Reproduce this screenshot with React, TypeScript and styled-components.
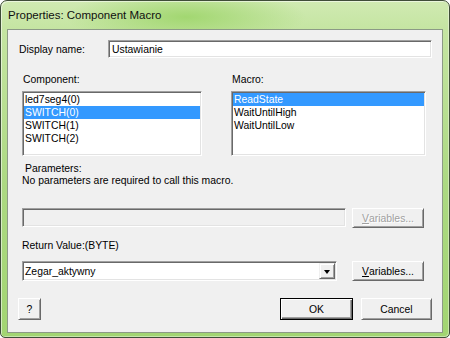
import React from 'react'
import styled, { createGlobalStyle, css } from 'styled-components'

const GlobalStyle = createGlobalStyle`
  html, body {
    margin: 0;
    padding: 0;
    background: #ffffff;
  }
  body {
    font-family: "Liberation Sans", Arial, sans-serif;
    font-size: 10.4px;
    color: #000;
  }
  * {
    box-sizing: border-box;
  }
`

const sunken = css`
  border: 1px solid;
  border-color: #a0a0a0 #ffffff #ffffff #a0a0a0;
  padding: 1px;
  box-shadow: inset 1px 1px 0 #696969, inset -1px -1px 0 #e3e3e3;
`

const Window = styled.div`
  width: 450px;
  height: 338px;
  display: flex;
  flex-direction: column;
  padding: 0 6px 4px 6px;
  border: 1px solid #3f4d38;
  border-radius: 7px 7px 5px 5px;
  background:
    radial-gradient(ellipse 120px 28px at 185px 16px, rgba(160, 214, 110, 0.95) 0%, rgba(160, 214, 110, 0) 100%),
    linear-gradient(180deg, #d0eab2 0%, #c5e5a2 28px, #acd982 55%, #a2d572 100%);
  box-shadow: inset 1px 1px 0 rgba(255, 255, 255, 0.55), inset -1px -1px 0 rgba(255, 255, 255, 0.4);
`
const TitleBar = styled.div`
  height: 28px;
  display: flex;
  align-items: center;
  padding-left: 1px;
  padding-bottom: 1px;
  font-size: 11.5px;
  color: #101010;
`
const Client = styled.div`
  flex: 1;
  display: flex;
  flex-direction: column;
  background: #f0f0f0;
  border: 1px solid #8c9a86;
  padding: 10px 10px 0 10px;
`
const NameRow = styled.div`
  display: flex;
  align-items: center;
  height: 18px;
`
const NameLabel = styled.div`
  width: 90px;
  padding-left: 1px;
`
const TextBox = styled.div<{ $disabled?: boolean }>`
  ${sunken};
  height: ${p => (p.$disabled ? 19 : 18)}px;
  background: ${p => (p.$disabled ? '#f0f0f0' : '#ffffff')};
  display: flex;
  align-items: center;
  padding-left: 3px;
  flex: 1;
`
const ListsRow = styled.div`
  display: grid;
  grid-template-columns: 180px 195px;
  column-gap: 29px;
  margin-top: 16px;
  padding-left: 4px;
`
const Column = styled.div`
  display: flex;
  flex-direction: column;
`
const ColLabel = styled.div`
  line-height: 12px;
  height: 12px;
  margin-bottom: 5px;
  padding-left: 1px;
`
const ListBox = styled.div`
  ${sunken};
  height: 65px;
  background: #ffffff;
  overflow: hidden;
`
const ListItem = styled.div<{ $selected?: boolean }>`
  height: 13px;
  line-height: 13px;
  padding-left: 1px;
  white-space: nowrap;
  background: ${p => (p.$selected ? '#3399ff' : 'transparent')};
  color: ${p => (p.$selected ? '#ffffff' : '#000000')};
`
const Params = styled.div`
  margin-top: 7px;
  padding-left: 4px;
`
const Line = styled.div<{ $indent?: number }>`
  line-height: 12px;
  height: 12px;
  padding-left: ${p => p.$indent ?? 0}px;
  white-space: nowrap;
`
const FieldRow = styled.div<{ $top: number; $field: number }>`
  display: grid;
  grid-template-columns: ${p => p.$field}px 72px;
  column-gap: ${p => 330 - p.$field}px;
  align-items: start;
  margin-top: ${p => p.$top}px;
  padding-left: 4px;
`
const ReturnLabel = styled(Line)`
  margin-top: 12px;
  padding-left: 4px;
`
const Button = styled.button<{ $default?: boolean; $w?: number; $h?: number }>`
  width: ${p => p.$w ?? 72}px;
  height: ${p => p.$h ?? 20}px;
  padding: 0;
  margin: 0;
  font-family: inherit;
  font-size: 10.4px;
  color: #000;
  background: #f0f0f0;
  border: 1px solid;
  border-color: ${p => (p.$default ? '#000000' : '#ffffff #696969 #696969 #ffffff')};
  box-shadow: ${p =>
    p.$default
      ? 'inset 1px 1px 0 #ffffff, inset -1px -1px 0 #696969, inset -2px -2px 0 #a0a0a0'
      : 'inset 1px 1px 0 #f0f0f0, inset -1px -1px 0 #a0a0a0'};
  display: flex;
  align-items: center;
  justify-content: center;
  &:disabled {
    color: #a0a0a0;
    text-shadow: 1px 1px 0 #ffffff;
  }
`
const Accel = styled.span`
  text-decoration: underline;
`
const Combo = styled.div`
  ${sunken};
  height: 20px;
  background: #ffffff;
  display: flex;
  align-items: stretch;
`
const ComboText = styled.div`
  flex: 1;
  display: flex;
  align-items: center;
  padding-left: 1px;
`
const DropButton = styled.div`
  width: 16px;
  background: #f0f0f0;
  border: 1px solid;
  border-color: #f0f0f0 #696969 #696969 #f0f0f0;
  box-shadow: inset 1px 1px 0 #ffffff, inset -1px -1px 0 #a0a0a0;
  display: flex;
  align-items: center;
  justify-content: center;
`
const Arrow = styled.div`
  width: 0;
  height: 0;
  border-left: 3.5px solid transparent;
  border-right: 3.5px solid transparent;
  border-top: 4px solid #000;
  margin-top: 1px;
`
const BottomRow = styled.div`
  display: flex;
  align-items: center;
  gap: 8px;
  margin-top: 17px;
`
const Spacer = styled.div`
  flex: 1;
`

export default function App() {
  return (
    <>
      <GlobalStyle />
      <Window>
        <TitleBar>Properties: Component Macro</TitleBar>
        <Client>
          <NameRow>
            <NameLabel>Display name:</NameLabel>
            <TextBox>Ustawianie</TextBox>
          </NameRow>
          <ListsRow>
            <Column>
              <ColLabel>Component:</ColLabel>
              <ListBox>
                <ListItem>led7seg4(0)</ListItem>
                <ListItem $selected>SWITCH(0)</ListItem>
                <ListItem>SWITCH(1)</ListItem>
                <ListItem>SWITCH(2)</ListItem>
              </ListBox>
            </Column>
            <Column>
              <ColLabel>Macro:</ColLabel>
              <ListBox>
                <ListItem $selected>ReadState</ListItem>
                <ListItem>WaitUntilHigh</ListItem>
                <ListItem>WaitUntilLow</ListItem>
              </ListBox>
            </Column>
          </ListsRow>
          <Params>
            <Line $indent={3}>Parameters:</Line>
            <Line>No parameters are required to call this macro.</Line>
          </Params>
          <FieldRow $top={21} $field={324}>
            <TextBox $disabled />
            <Button disabled>
              <Accel>V</Accel>ariables...
            </Button>
          </FieldRow>
          <ReturnLabel>Return Value:(BYTE)</ReturnLabel>
          <FieldRow $top={9} $field={315}>
            <Combo>
              <ComboText>Zegar_aktywny</ComboText>
              <DropButton>
                <Arrow />
              </DropButton>
            </Combo>
            <Button>
              <Accel>V</Accel>ariables...
            </Button>
          </FieldRow>
          <BottomRow>
            <Button $w={23} $h={22}>?</Button>
            <Spacer />
            <Button $default $w={73} $h={22}>OK</Button>
            <Button $w={71} $h={22}>Cancel</Button>
          </BottomRow>
        </Client>
      </Window>
    </>
  )
}
